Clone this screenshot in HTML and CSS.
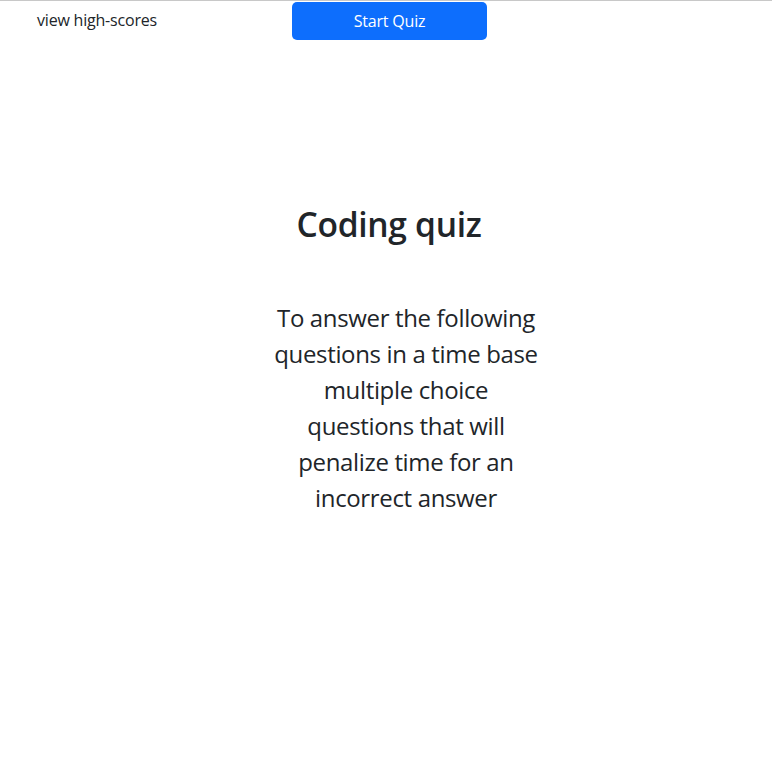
FILE: index.html
```html
<!DOCTYPE html>
<html lang="en">
<head>
<meta charset="utf-8">
<title>Coding quiz</title>
<link rel="stylesheet" href="styles.css">
</head>
<body>
<header class="topbar">
  <a class="scores-link">view high-scores</a>
  <button class="start-btn" type="button">Start Quiz</button>
</header>
<main class="intro">
  <h1 class="title">Coding quiz</h1>
  <p class="lead">To answer the following questions in a time base multiple choice questions that will penalize time for an incorrect answer</p>
</main>
</body>
</html>
```
FILE: styles.css
```css
* { box-sizing: border-box; }
html, body { margin: 0; padding: 0; }
body {
  font-family: "Open Sans", "Noto Sans", sans-serif;
  color: #212529;
  background: #fff;
  border-top: 1px solid #c8c8c8;
}
.topbar {
  display: flex;
  align-items: flex-start;
  height: 40px;
  padding-top: 1px;
}
.scores-link {
  margin-left: 37px;
  width: 255px;
  font-size: 16px;
  line-height: 36px;
  letter-spacing: -0.2px;
  color: #212529;
}
.start-btn {
  width: 195px;
  height: 38px;
  background: #0d6efd;
  color: #fff;
  border: none;
  border-radius: 5px;
  font-family: inherit;
  font-size: 16px;
  letter-spacing: -0.2px;
}
.intro {
  display: flex;
  flex-direction: column;
  align-items: center;
}
.title {
  margin: 163px 0 0;
  font-size: 33.6px;
  font-weight: 600;
  line-height: 1.2;
  letter-spacing: -0.3px;
  position: relative;
  left: 3px;
}
.lead {
  margin: 56px 0 0 40px;
  width: 266px;
  text-align: center;
  font-size: 24px;
  line-height: 36px;
  letter-spacing: -0.35px;
}
```
